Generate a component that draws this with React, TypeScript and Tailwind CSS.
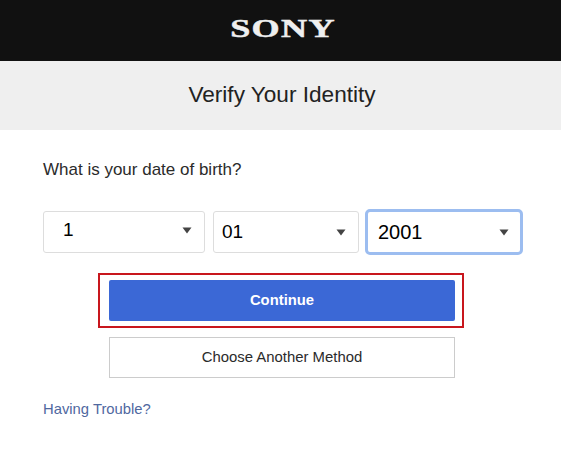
const font = { fontFamily: '"Liberation Sans", Arial, sans-serif' };

function Caret() {
  return (
    <svg width="10" height="7" viewBox="0 0 10 7" className="shrink-0">
      <path d="M0.5 0.5H9.5L5 6.5Z" fill="#444444" />
    </svg>
  );
}

function Field({ value, className, textClass }: { value: string; className: string; textClass: string }) {
  return (
    <div className={`flex items-center justify-between bg-white rounded-[3px] shrink-0 ${className}`}>
      <span className={`text-black leading-none ${textClass}`}>{value}</span>
      <Caret />
    </div>
  );
}

export default function App() {
  return (
    <div className="w-[561px] h-[453px] bg-white overflow-hidden flex flex-col" style={font}>
      <header className="h-[61px] bg-[#111111] flex items-center justify-center shrink-0">
        <span
          className="text-[#efefef] font-bold text-[26px] leading-none tracking-[1px] scale-x-[1.39] mt-[-3px] ml-[6px] [-webkit-text-stroke:0.5px_#efefef]"
          style={{ fontFamily: '"Liberation Serif", serif' }}
        >
          SONY
        </span>
      </header>
      <div className="h-[69px] bg-[#efefef] flex items-center justify-center shrink-0">
        <h1 className="text-[22.6px] leading-none font-normal text-[#222222] mt-[-1px] ml-[3px]">Verify Your Identity</h1>
      </div>
      <main className="flex flex-col pl-[43px]">
        <p className="mt-[30px] text-[17px] leading-[20px] text-[#2b2b2b]">What is your date of birth?</p>
        <div className="flex items-center mt-[29px] h-[46px]">
          <Field
            value="1"
            className="w-[162px] h-[42px] border border-[#dddddd] pl-[19px] pr-[12px] pb-[3px]"
            textClass="text-[19px] mb-[2px]"
          />
          <Field
            value="01"
            className="w-[146px] h-[42px] ml-[8px] border border-[#dddddd] pl-[8px] pr-[12px]"
            textClass="text-[19px] mt-[-1px]"
          />
          <Field
            value="2001"
            className="w-[158px] h-[46px] ml-[6px] border-[3px] border-[#9cbdf0] rounded-[5px] pl-[10px] pr-[11px]"
            textClass="text-[20px]"
          />
        </div>
        <div className="ml-[55px] mt-[18px] w-[366px] h-[55px] border-2 border-[#c8161d] flex items-center pl-[9px]">
          <button className="w-[346px] h-[41px] bg-[#3b68d6] rounded-[2px] text-white font-bold text-[14.8px]">
            Continue
          </button>
        </div>
        <button className="ml-[66px] mt-[9px] w-[346px] h-[41px] bg-white border border-[#cccccc] text-[14.9px] text-[#2b2b2b]">
          Choose Another Method
        </button>
        <a className="mt-[22px] text-[14.8px] leading-[18px] text-[#50689f]">Having Trouble?</a>
      </main>
    </div>
  );
}
